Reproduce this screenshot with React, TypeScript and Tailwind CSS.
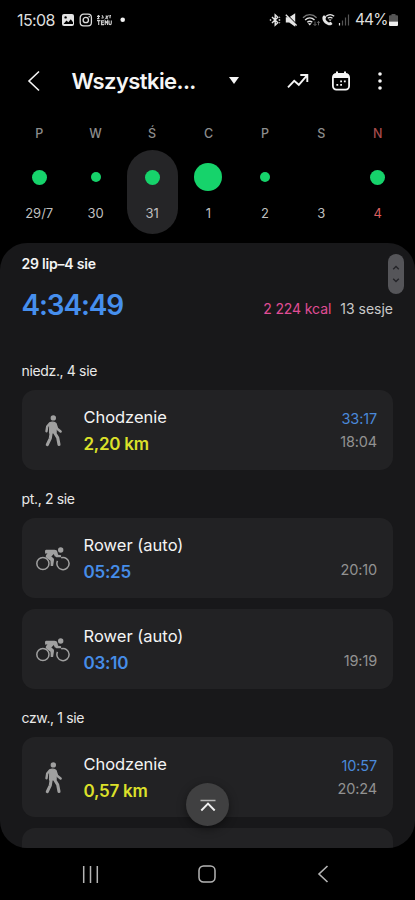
import React from "react";

type Day = { label: string; date: string; dot: number; selected?: boolean; holiday?: boolean };

const days: Day[] = [
  { label: "P", date: "29/7", dot: 15 },
  { label: "W", date: "30", dot: 10 },
  { label: "Ś", date: "31", dot: 15, selected: true },
  { label: "C", date: "1", dot: 28 },
  { label: "P", date: "2", dot: 10 },
  { label: "S", date: "3", dot: 0 },
  { label: "N", date: "4", dot: 15, holiday: true },
];

function StatusBar() {
  return (
    <div className="flex h-10 items-center pl-[17px] pr-[17px] text-[#dedede]">
      <span className="w-[45px] text-[16px] leading-5 tracking-[-0.6px]">15:08</span>
      <svg width="64" height="14" viewBox="0 0 64 14" fill="none">
        <rect x="0" y="1" width="12" height="12" rx="2" fill="#e4e4e4" />
        <circle cx="3.6" cy="4.4" r="1.2" fill="#000" />
        <path d="M1.5 11 4.5 7.5 6.3 9.2 8.8 6.2 11 9.2V11Z" fill="#000" />
        <rect x="18.2" y="1.2" width="11.2" height="11.6" rx="3.4" stroke="#dcdcdc" strokeWidth="1.3" />
        <circle cx="23.8" cy="7" r="2.7" stroke="#dcdcdc" strokeWidth="1.3" />
        <circle cx="27.2" cy="3.8" r=".8" fill="#dcdcdc" />
        <path d="M35 3.4h3M36.5 2v3.4M40 2.2l1.5 2.6M44.5 4.8l2-2.4M44 2.5l.8 2M39.4 5h2M35 5.6h2.4M43 5.2h3M48 2.4v2.8M49 2.6h-1.6M35 7.6h3.4M36.7 7.6V12" stroke="#cfcfcf" strokeWidth="1.1" />
        <path d="M42 7.9h-2.5v3.7H42M39.5 9.7h2.3M43.2 12V7.8l1.2 2 1.2-2V12M47 7.4V10c0 2.2 2.3 2.2 2.3 0V7.4" stroke="#cfcfcf" strokeWidth="1.1" />
        <circle cx="60.7" cy="6.7" r="2.3" fill="#f2f2f2" />
      </svg>
      <div className="ml-auto flex items-center">
        <svg className="mr-[2px]" width="84" height="16" viewBox="0 0 84 16" fill="none">
          <path d="M3 5 8.8 10.8 6.2 13.2V2.8L8.8 5.2 3 11M.8 8h1.4M9.7 8h1.5M10.3 5.5l.6-.6M10.3 10.5l.6.6" stroke="#e5e5e5" strokeWidth="1.4" />
          <path d="M16.8 5.2h3.4l6-4v13.6l-6-4.300h-3.400z" fill="#e5e5e5" />
          <path d="m18 2.800 10.800 10.800" stroke="#000" strokeWidth="1.300" />
          <path d="m16.800 2.800 10.800 10.800" stroke="#e5e5e5" strokeWidth="1.400" />
          <path d="M34 5.700c4-4 9.600-4 13.600 0" stroke="#777" strokeWidth="1.300" />
          <path d="M36.100 8c2.800-2.700 6.600-2.700 9.400 0M38.300 10.300c1.600-1.400 3.400-1.400 5 0" stroke="#e5e5e5" strokeWidth="1.400" />
          <path d="m38.900 11.300 3.800 0-1.900 2.100z" fill="#e5e5e5" />
          <path d="M46 9.500v4M44.500 12l1.500 1.500L47.500 12M49.500 13.300v-4M48.200 10.800l1.300-1.500 1.300 1.500" stroke="#666" strokeWidth="1" />
          <path d="M55 3.200 57.300 4.800 56.500 7c.8 1.800 1.700 2.600 3.400 3.400l2-.7 1.600 2.200c-1.200 1.500-3 1.900-5 .9C54.500 11 53 8 53.500 5c.2-.8.8-1.400 1.500-1.800z" fill="#e5e5e5" />
          <path d="M57 4.300c2.600-2.200 5.700-2.200 8.200 0M58.800 6.300c1.500-1.200 3.200-1.200 4.700 0" stroke="#e5e5e5" strokeWidth="1.200" />
          <path d="m59.500 7.400h3.200L61.100 9z" fill="#e5e5e5" />
          <path d="M70.500 11v2.500" stroke="#e5e5e5" strokeWidth="1.200" />
          <path d="M73.500 8.500v5M76.500 5.500v8M79.500 2.500v11" stroke="#555" strokeWidth="1.200" />
        </svg>
        <span className="w-[34px] whitespace-nowrap text-[15.5px] leading-5 tracking-[-0.9px]">44%</span>
        <svg width="9" height="12" viewBox="0 0 9 12">
          <path d="M2.500 0h4v1.200H8q1 0 1 1V7.500H0V2.200q0-1 1-1h1.500z" fill="#555" />
          <path d="M0 7.500h9V11q0 1-1 1H1q-1 0-1-1z" fill="#eee" />
        </svg>
      </div>
    </div>
  );
}

function Header() {
  return (
    <div className="flex h-[82px] items-center pl-[27px] pr-[33px] text-[#f5f5f5]">
      <svg width="14" height="22" viewBox="0 0 14 22" fill="none" stroke="currentColor" strokeWidth="1.6">
        <path d="M12 1.5 2 11l10 9.500" />
      </svg>
      <h1 className="ml-[30.5px] w-[157.5px] whitespace-nowrap text-[22px] leading-7 font-semibold tracking-[-0.6px]">Wszystkie...</h1>
      <svg width="10" height="8" viewBox="0 0 10 8">
        <path d="M0 .1h10L5 7.100z" fill="currentColor" />
      </svg>
      <svg className="ml-[48px]" width="22" height="16" viewBox="0 0 22 16" fill="none" stroke="currentColor" strokeWidth="1.9">
        <path d="m1 14.300 6.200-6.500 4.600 4L19.600 2.800M13.300 2h7v7" />
      </svg>
      <svg className="ml-[22px]" width="20" height="20" viewBox="0 0 20 20" fill="none">
        <rect x="1.900" y="2.900" width="16.200" height="15.700" rx="3.500" stroke="currentColor" strokeWidth="1.800" />
        <path d="M2 7V5.500C2 4 3 3 4.500 3h11C17 3 18 4 18 5.500V7zM5 .500h2V4H5zM13 .500h2V4h-2z" fill="currentColor" />
        <path d="M9.200 10.400h1.800M12.900 10.400h1.800M5.400 13.800h1.800M9.200 13.800h1.800" stroke="currentColor" strokeWidth="1.800" />
      </svg>
      <svg className="ml-auto" width="4" height="18" viewBox="0 0 4 18" fill="currentColor">
        <circle cx="2" cy="2" r="1.800" />
        <circle cx="2" cy="9" r="1.800" />
        <circle cx="2" cy="16" r="1.800" />
      </svg>
    </div>
  );
}

function Week() {
  return (
    <div className="grid h-[121px] grid-cols-7 pl-[11px] pr-[9px]">
      {days.map((d, i) => (
        <div key={i} className="flex flex-col items-center">
          <span className={`mt-[2px] h-[20px] text-[12.5px] leading-5 font-medium ${d.holiday ? "text-[#a64b4b]" : "text-[#8d8d8d]"}`}>
            {d.label}
          </span>
          <div className={`mt-[6px] flex h-[84px] w-[51px] flex-col items-center rounded-full ${d.selected ? "bg-[#252527]" : ""}`}>
            <div className="mt-[12px] flex h-[30px] items-center">
              <span className="rounded-full bg-[#16d36b]" style={{ width: d.dot, height: d.dot }} />
            </div>
            <span className={`mt-[11px] text-[13px] leading-5 ${d.holiday ? "text-[#dc5f5f]" : "text-[#bfbfbf]"}`}>{d.date}</span>
          </div>
        </div>
      ))}
    </div>
  );
}

function Walker() {
  return (
    <svg width="18" height="32" viewBox="0 0 18 32" fill="none" stroke="#a0a0a0" strokeLinecap="round" strokeLinejoin="round">
      <circle cx="9.300" cy="2.900" r="2.700" fill="#a0a0a0" stroke="none" />
      <path d="M5.800 8c1.500-1.200 4.900-1.200 6 .3l.3 9-6.400.7z" fill="#a0a0a0" strokeWidth="1.400" />
      <path d="M5.700 8.500 3.200 11.500 2.500 16.200M11.700 9.500l1.500 4.300 3.400 2.700" strokeWidth="2.400" />
      <path d="M7.200 17.500 6.300 23.300 3.300 29.600M10.500 17.500l3.200 5.200 1.300 6.800" strokeWidth="3.100" />
    </svg>
  );
}

function Cyclist() {
  return (
    <svg width="34" height="24" viewBox="0 0 34 24" fill="none" stroke="#a0a0a0">
      <circle cx="6.900" cy="16.500" r="6.100" strokeWidth="1.500" />
      <path d="M25.200 10.700A6.100 6.100 0 1 1 21.500 13.900" strokeWidth="1.500" />
      <circle cx="24.700" cy="3" r="2.700" fill="#a0a0a0" stroke="none" />
      <path d="M9 4.300C9 3 9.800 2.700 11 2.700h7.500c1.600 0 2.600.7 2.900 2.200l.7 2.900 3 .4v2h-4.600c-1 0-1.600-.4-1.900-1.200l-.8-2-2.500 2.400 1.900 1.600c.7.6.9 1.300.8 2.200l-.9 5.800h-2.400l-.2-5.200-3.800-2.800c-1.100-.8-1.200-1.800-.5-2.900l1.300-1.900-2.300.6z" fill="#a0a0a0" stroke="none" />
    </svg>
  );
}

type CardProps = { kind: "walk" | "bike"; name: string; value: string; duration?: string; time: string };

function Card({ kind, name, value, duration, time }: CardProps) {
  return (
    <div className="flex h-20 shrink-0 rounded-[13px] bg-[#222224] pr-4">
      <div className={`flex w-[62px] items-center justify-center pl-px ${kind === "walk" ? "pt-[2px]" : "pt-px"}`}>
        {kind === "walk" ? <Walker /> : <Cyclist />}
      </div>
      <div className="flex flex-col pt-[15px]">
        <span className={`h-[27px] text-[16.5px] leading-6 text-[#f4f4f4] ${kind === "walk" ? "tracking-[-0.05px]" : "tracking-[0.02px]"}`}>{name}</span>
        <span className={`text-[17px] leading-6 font-semibold tracking-[-0.25px] ${kind === "walk" ? "text-[#dce12a]" : "text-[#468de8]"}`}>{value}</span>
      </div>
      <div className="ml-auto flex flex-col items-end justify-end pb-[17px] text-[14.5px] leading-[22.5px] tracking-[-0.15px]">
        {duration && <span className="text-[#4a89da]">{duration}</span>}
        <span className="text-[#929292]">{time}</span>
      </div>
    </div>
  );
}

function DayLabel({ children }: { children: React.ReactNode }) {
  return <h2 className="my-[9px] text-[14px] leading-5 tracking-[-0.35px] text-[#e8e8e8]">{children}</h2>;
}

function NavBar() {
  return (
    <div className="flex h-[52px] items-center justify-between pl-[82px] pr-[86px] text-[#b5b5b5]">
      <svg width="17" height="17" viewBox="0 0 17 17" stroke="currentColor" strokeWidth="1.5">
        <path d="M1.700 0v17M8.500 0v17M15.300 0v17" />
      </svg>
      <svg className="mr-[3px]" width="18" height="18" viewBox="0 0 18 18" fill="none" stroke="currentColor" strokeWidth="1.5">
        <rect x="1" y="1" width="16" height="16" rx="4.500" />
      </svg>
      <svg width="12" height="18" viewBox="0 0 12 18" fill="none" stroke="currentColor" strokeWidth="1.6">
        <path d="M10.500 1 2 9l8.500 8" />
      </svg>
    </div>
  );
}

export default function App() {
  return (
    <div className="flex h-[900px] w-[415px] flex-col overflow-hidden bg-black font-['Inter','Liberation_Sans',sans-serif]">
      <StatusBar />
      <Header />
      <Week />
      <main className="relative h-[605px] overflow-hidden rounded-[27px] bg-[#18181a] pr-[22px] pl-[21.5px]">
        <p className="mt-[11px] text-[14px] leading-5 font-semibold tracking-[-0.2px] text-[#f4f4f4]">29 lip–4 sie</p>
        <div className="mt-[13px] flex h-[36px] justify-between">
          <span className="text-[28px] leading-9 font-semibold tracking-[-1.15px] text-[#468fee]">4:34:49</span>
          <div className="flex gap-[9px] pt-[12px] text-[14px] leading-5">
            <span className="tracking-[-0.1px] text-[#e04d95]">2 224 kcal</span>
            <span className="text-[#c9c9c9]">13 sesje</span>
          </div>
        </div>
        <div className="h-[29px]" />
        <DayLabel>niedz., 4 sie</DayLabel>
        <Card kind="walk" name="Chodzenie" value="2,20 km" duration="33:17" time="18:04" />
        <div className="h-[10px]" />
        <DayLabel>pt., 2 sie</DayLabel>
        <div className="flex flex-col gap-[11px]">
          <Card kind="bike" name="Rower (auto)" value="05:25" time="20:10" />
          <Card kind="bike" name="Rower (auto)" value="03:10" time="19:19" />
        </div>
        <div className="h-[10px]" />
        <DayLabel>czw., 1 sie</DayLabel>
        <Card kind="walk" name="Chodzenie" value="0,57 km" duration="10:57" time="20:24" />
        <div className="mt-[11px] h-20 rounded-[13px] bg-[#222224]" />
        <div className="absolute top-[11px] right-[11px] flex h-[40px] w-[16px] items-center justify-center rounded-full bg-[#555559]">
          <svg width="8" height="20" viewBox="0 0 8 20" fill="none" stroke="#242428" strokeWidth="1.4">
            <path d="M1.200 5.200 4 2.500l2.800 2.700M1.200 14.800 4 17.500l2.800-2.700" />
          </svg>
        </div>
        <button className="absolute top-[540px] left-[186px] flex size-[43px] items-center justify-center rounded-full bg-[#404041] shadow-[0_3px_10px_rgba(0,0,0,0.45)]">
          <svg width="16" height="14" viewBox="0 0 16 14" fill="none" stroke="#f0f0f0">
            <path d="M.500 2.500h15" stroke="#b5b5b5" strokeWidth="1.600" />
            <path d="M1.300 12.500 8 5.500l6.700 7" strokeWidth="1.900" />
          </svg>
        </button>
      </main>
      <NavBar />
    </div>
  );
}
